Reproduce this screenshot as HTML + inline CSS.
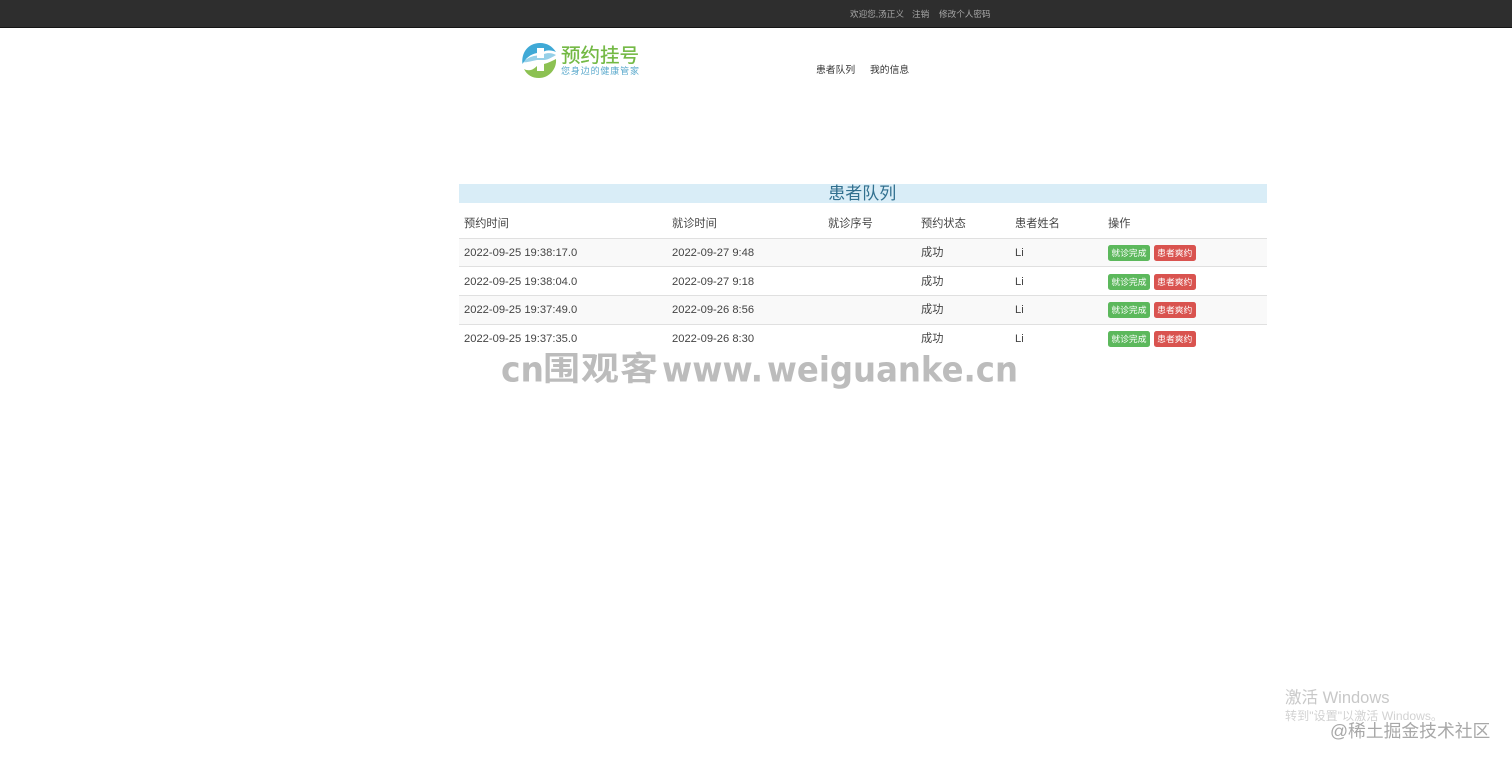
<!DOCTYPE html>
<html lang="zh">
<head>
<meta charset="utf-8">
<title>患者队列</title>
<style>
html,body{margin:0;padding:0;background:#fff;}
body{width:1512px;height:763px;overflow:hidden;position:relative;font-family:"Liberation Sans","Noto Sans CJK SC",sans-serif;color:#333;font-size:12px;}
.a{position:absolute;white-space:nowrap;}
#top{left:0;top:0;width:1512px;height:27px;background:#2e2e2e;border-bottom:1px solid #151515;}
.t{color:#a8a8a8;font-size:8.6px;line-height:14px;top:7px;}
.n{color:#333;font-size:9.800px;line-height:14px;top:64px;}
#bar{left:458.500px;top:184px;width:808.500px;height:19px;background:#d9edf7;color:#31708f;font-size:17px;line-height:19px;text-align:center;padding-right:1px;box-sizing:border-box;}
.c{font-size:11.200px;line-height:14px;color:#444;}
.row{position:absolute;left:458.500px;width:808.500px;}
.btn{position:absolute;height:16px;width:42.500px;border-radius:2.500px;color:#fff;font-size:8.800px;line-height:16px;text-align:center;font-weight:400;}
.g{background:#5cb85c;left:1107.700px;}
.r{background:#d9534f;left:1153.500px;}
svg{position:absolute;overflow:visible;}
</style>
</head>
<body>
<div class="a" id="top"></div>
<div class="a t" style="left:850px">欢迎您,汤正义</div>
<div class="a t" style="left:912px">注销</div>
<div class="a t" style="left:939px">修改个人密码</div>

<svg style="left:520px;top:40px" width="122" height="40" viewBox="0 0 122 40">
<path d="M2.500 24C1 13 8 3 20 3C27 3 32 6 36 12C31 10 27 10 24 11.500L24 8L17 8L17 13C10 14.500 6 18 2.500 24Z" fill="#3fa9d6"/>
<path d="M3 22C8 17 13 16 17 15.500L17 18L24 18L24 14C28 12.500 33 13 36 15C31 18 27 20 24 20L17 20C11 21 6 23 3 22Z" fill="#3fa9d6" opacity=".55"/>
<path d="M36 19C37 29 29 38 19 38C12 38 7 35 4 29C10 32 14 29 17 26L17 31L24 31L24 24C28 23 32 21 36 19Z" fill="#8cc152"/>
<text x="41" y="22" font-size="19.500" fill="#72b843" stroke="#72b843" stroke-width=".3" font-family="'Liberation Sans','Noto Sans CJK SC',sans-serif" textLength="78">预约挂号</text>
<text x="41" y="34" font-size="9" fill="#5aa9cc" font-family="'Liberation Sans','Noto Sans CJK SC',sans-serif" textLength="78">您身边的健康管家</text>
</svg>

<div class="a n" style="left:816px">患者队列</div>
<div class="a n" style="left:870px">我的信息</div>

<div class="a" id="bar">患者队列</div>

<div class="row" style="top:238px;height:28px;background:#f9f9f9;border-top:1px solid #e0e0e0;"></div>
<div class="row" style="top:266px;height:28px;border-top:1px solid #e0e0e0;"></div>
<div class="row" style="top:295px;height:28px;background:#f9f9f9;border-top:1px solid #e0e0e0;"></div>
<div class="row" style="top:324px;height:28px;border-top:1px solid #e0e0e0;"></div>

<div class="a c" style="left:464px;top:217px">预约时间</div>
<div class="a c" style="left:672px;top:217px">就诊时间</div>
<div class="a c" style="left:828px;top:217px">就诊序号</div>
<div class="a c" style="left:921px;top:217px">预约状态</div>
<div class="a c" style="left:1015px;top:217px">患者姓名</div>
<div class="a c" style="left:1108px;top:217px">操作</div>

<div class="a c" style="left:464px;top:246px">2022-09-25 19:38:17.0</div>
<div class="a c" style="left:672px;top:246px">2022-09-27 9:48</div>
<div class="a c" style="left:921px;top:246px">成功</div>
<div class="a c" style="left:1015px;top:246px">Li</div>
<div class="btn g" style="top:245px">就诊完成</div>
<div class="btn r" style="top:245px">患者爽约</div>

<div class="a c" style="left:464px;top:275px">2022-09-25 19:38:04.0</div>
<div class="a c" style="left:672px;top:275px">2022-09-27 9:18</div>
<div class="a c" style="left:921px;top:275px">成功</div>
<div class="a c" style="left:1015px;top:275px">Li</div>
<div class="btn g" style="top:274px">就诊完成</div>
<div class="btn r" style="top:274px">患者爽约</div>

<div class="a c" style="left:464px;top:303px">2022-09-25 19:37:49.0</div>
<div class="a c" style="left:672px;top:303px">2022-09-26 8:56</div>
<div class="a c" style="left:921px;top:303px">成功</div>
<div class="a c" style="left:1015px;top:303px">Li</div>
<div class="btn g" style="top:302px">就诊完成</div>
<div class="btn r" style="top:302px">患者爽约</div>

<div class="a c" style="left:464px;top:332px">2022-09-25 19:37:35.0</div>
<div class="a c" style="left:672px;top:332px">2022-09-26 8:30</div>
<div class="a c" style="left:921px;top:332px">成功</div>
<div class="a c" style="left:1015px;top:332px">Li</div>
<div class="btn g" style="top:331px">就诊完成</div>
<div class="btn r" style="top:331px">患者爽约</div>

<svg style="left:0;top:0" width="1512" height="763" viewBox="0 0 1512 763">
<g fill="#bcbcbc" font-family="'DejaVu Sans',sans-serif" font-weight="700" font-size="35">
<text x="501" y="381.500" textLength="43" lengthAdjust="spacingAndGlyphs">cn</text>
<text x="662" y="381.500" textLength="101" lengthAdjust="spacingAndGlyphs">www.</text>
<text x="767" y="381.500" textLength="251" lengthAdjust="spacingAndGlyphs">weiguanke.cn</text>
</g>
<g fill="#bcbcbc" font-family="'Noto Sans CJK SC',sans-serif" font-weight="700" font-size="33">
<text x="543" y="380" textLength="37" lengthAdjust="spacingAndGlyphs">围</text>
<text x="581" y="380" textLength="38" lengthAdjust="spacingAndGlyphs">观</text>
<text x="620" y="380" textLength="38" lengthAdjust="spacingAndGlyphs">客</text>
</g>
<g font-family="'Liberation Sans','Noto Sans CJK SC',sans-serif">
<text x="1285" y="703" font-size="16.500" fill="#c8c8c8">激活 Windows</text>
<text x="1285" y="720" font-size="12" fill="#d2d2d2" textLength="158" lengthAdjust="spacingAndGlyphs">转到"设置"以激活 Windows。</text>
<text x="1330" y="737" font-size="17.800" fill="#a8a8a8">@稀土掘金技术社区</text>
</g>
</svg>
</body>
</html>
